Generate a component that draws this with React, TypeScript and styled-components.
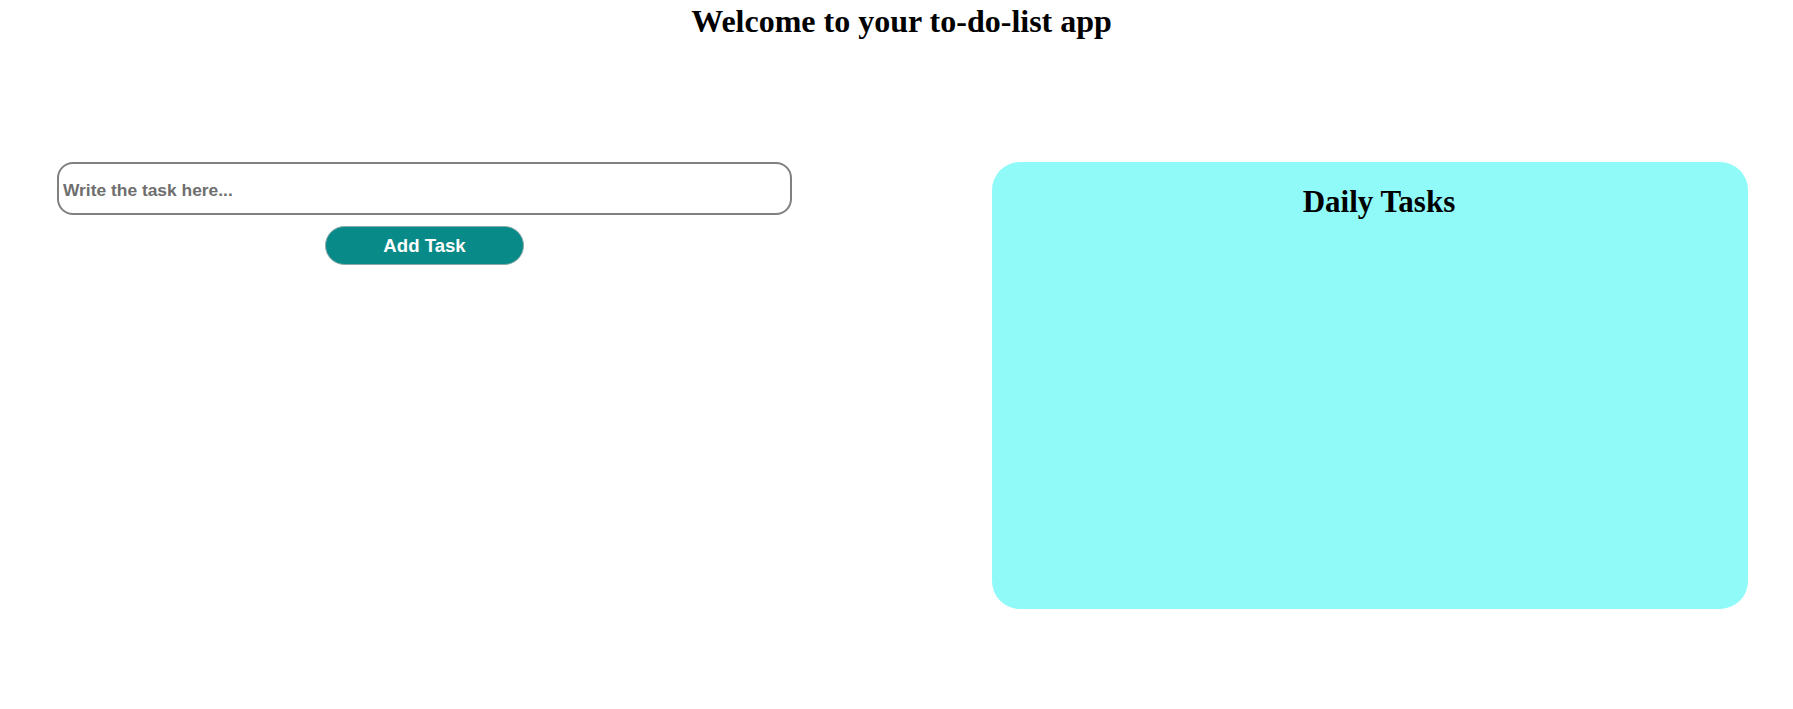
import React from "react";
import styled, { createGlobalStyle } from "styled-components";

const GlobalStyle = createGlobalStyle`
  html, body {
    margin: 0;
    padding: 0;
    background: #ffffff;
  }
  body {
    font-family: "Liberation Serif", "Times New Roman", serif;
  }
`;

const Page = styled.div`
  display: flex;
  flex-direction: column;
  min-height: 709px;
`;

const Title = styled.h1`
  margin: 0;
  padding: 3px 0 0 10px;
  font-family: "Liberation Serif", "Times New Roman", serif;
  font-size: 32px;
  font-weight: 700;
  line-height: 36px;
  text-align: center;
  color: #000;
`;

const Main = styled.main`
  display: flex;
  align-items: flex-start;
  margin-top: 123px;
  padding: 0 45px 0 57px;
  gap: 200px;
`;

const FormColumn = styled.section`
  width: 735px;
  display: flex;
  flex-direction: column;
  align-items: center;
  gap: 11px;
`;

const TaskInput = styled.input`
  box-sizing: border-box;
  width: 100%;
  height: 53px;
  border: 2px solid #808080;
  border-radius: 16px;
  padding: 3px 4px 0;
  font-family: "Liberation Sans", Arial, sans-serif;
  font-size: 17.4px;
  font-weight: 700;
  color: #333;
  outline: none;
  &::placeholder {
    color: #6e6e6e;
    opacity: 1;
  }
`;

const AddButton = styled.button`
  box-sizing: border-box;
  width: 199px;
  height: 39px;
  border: 1px solid #8aa9a8;
  border-radius: 20px;
  background: #088a88;
  color: #ffffff;
  font-family: "Liberation Sans", Arial, sans-serif;
  font-size: 18.6px;
  font-weight: 700;
  padding: 1px 0 0;
  cursor: pointer;
`;

const TasksCard = styled.section`
  box-sizing: border-box;
  width: 756px;
  height: 447px;
  border-radius: 28px;
  background: #90faf9;
  padding: 22px 0 0 18px;
`;

const CardTitle = styled.h2`
  margin: 0;
  font-family: "Liberation Serif", "Times New Roman", serif;
  font-size: 31px;
  font-weight: 700;
  text-align: center;
  color: #000;
`;

export default function App() {
  return (
    <>
      <GlobalStyle />
      <Page>
        <Title>Welcome to your to-do-list app</Title>
        <Main>
          <FormColumn>
            <TaskInput type="text" placeholder="Write the task here..." />
            <AddButton type="button">Add Task</AddButton>
          </FormColumn>
          <TasksCard>
            <CardTitle>Daily Tasks</CardTitle>
          </TasksCard>
        </Main>
      </Page>
    </>
  );
}
